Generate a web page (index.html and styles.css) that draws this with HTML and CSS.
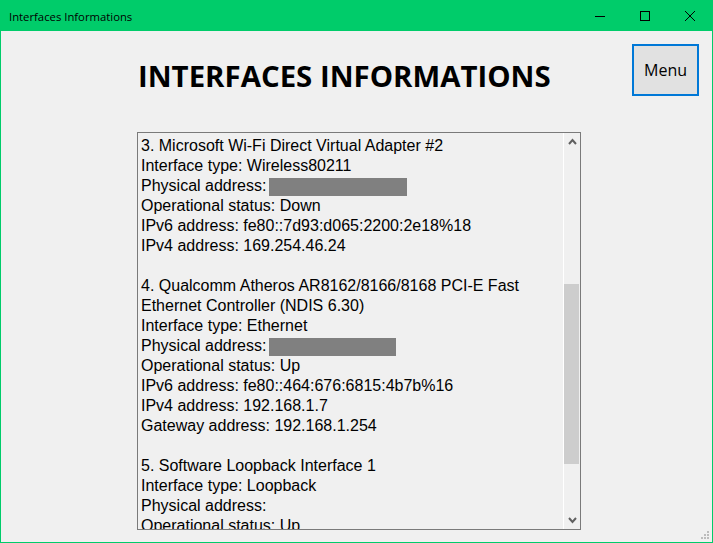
FILE: index.html
```html
<!DOCTYPE html>
<html>
<head>
<meta charset="utf-8">
<link rel="stylesheet" href="styles.css">
</head>
<body>
<div class="window">
  <div class="titlebar">
    <span class="title">Interfaces Informations</span>
    <div class="controls">
      <span class="ctl"><svg width="10" height="10" viewBox="0 0 10 10"><path d="M0 5.5H10" stroke="#000" stroke-width="1"/></svg></span>
      <span class="ctl"><svg width="10" height="10" viewBox="0 0 10 10"><rect x="0.5" y="0.5" width="9" height="9" fill="none" stroke="#000" stroke-width="1"/></svg></span>
      <span class="ctl"><svg width="10" height="10" viewBox="0 0 10 10"><path d="M0 0L10 10M10 0L0 10" stroke="#000" stroke-width="1"/></svg></span>
    </div>
  </div>
  <div class="content">
    <div class="header">
      <h1 class="heading">INTERFACES INFORMATIONS</h1>
      <button class="menu">Menu</button>
    </div>
    <div class="textbox">
      <div class="text">
        <div>3. Microsoft Wi-Fi Direct Virtual Adapter #2</div>
        <div>Interface type: Wireless80211</div>
        <div>Physical address: <span class="mask m1"></span></div>
        <div>Operational status: Down</div>
        <div>IPv6 address: fe80::7d93:d065:2200:2e18%18</div>
        <div>IPv4 address: 169.254.46.24</div>
        <div>&nbsp;</div>
        <div>4. Qualcomm Atheros AR8162/8166/8168 PCI-E Fast</div>
        <div>Ethernet Controller (NDIS 6.30)</div>
        <div>Interface type: Ethernet</div>
        <div>Physical address: <span class="mask m2"></span></div>
        <div>Operational status: Up</div>
        <div>IPv6 address: fe80::464:676:6815:4b7b%16</div>
        <div>IPv4 address: 192.168.1.7</div>
        <div>Gateway address: 192.168.1.254</div>
        <div>&nbsp;</div>
        <div>5. Software Loopback Interface 1</div>
        <div>Interface type: Loopback</div>
        <div>Physical address:</div>
        <div>Operational status: Up</div>
      </div>
      <div class="scrollbar">
        <div class="arrow"><svg width="9" height="7" viewBox="0 0 9 7"><path d="M1 6L4.5 2L8 6" fill="none" stroke="#606060" stroke-width="2"/></svg></div>
        <div class="track"><div class="thumb"></div></div>
        <div class="arrow"><svg width="9" height="7" viewBox="0 0 9 7"><path d="M1 1L4.5 5L8 1" fill="none" stroke="#606060" stroke-width="2"/></svg></div>
      </div>
    </div>
  </div>
  <svg class="grip" width="9" height="9" viewBox="0 0 9 9">
    <rect x="6" y="0" width="2" height="2" fill="#bcbcbc"/>
    <rect x="3" y="3" width="2" height="2" fill="#bcbcbc"/>
    <rect x="6" y="3" width="2" height="2" fill="#bcbcbc"/>
    <rect x="0" y="6" width="2" height="2" fill="#bcbcbc"/>
    <rect x="3" y="6" width="2" height="2" fill="#bcbcbc"/>
    <rect x="6" y="6" width="2" height="2" fill="#bcbcbc"/>
  </svg>
</div>
</body>
</html>
```
FILE: styles.css
```css
html, body {
  margin: 0;
  padding: 0;
}
body {
  width: 713px;
  height: 543px;
  overflow: hidden;
}
.window {
  position: relative;
  box-sizing: border-box;
  width: 713px;
  height: 543px;
  border: 1px solid #00cc6a;
  background: #f0f0f0;
  display: flex;
  flex-direction: column;
}
.titlebar {
  height: 30px;
  background: #00cc6a;
  display: flex;
  align-items: center;
  flex-shrink: 0;
}
.title {
  font-family: "Open Sans", sans-serif;
  font-size: 11.3px;
  color: #000;
  padding-left: 8px;
}
.controls {
  margin-left: auto;
  display: flex;
  height: 30px;
}
.ctl {
  width: 45px;
  height: 30px;
  display: flex;
  align-items: center;
  justify-content: center;
}
.content {
  flex: 1;
  display: flex;
  flex-direction: column;
  padding-left: 136px;
  padding-right: 13px;
}
.header {
  display: flex;
  align-items: flex-start;
  height: 101px;
}
.heading {
  margin: 25px 0 0 1px;
  font-family: "Open Sans", sans-serif;
  font-weight: 700;
  font-size: 29.4px;
  line-height: 40px;
  color: #000;
}
.menu {
  margin-left: auto;
  margin-top: 13px;
  width: 67px;
  height: 52px;
  box-sizing: border-box;
  border: 2px solid #0078d7;
  background: #e1e1e1;
  font-family: "Open Sans", sans-serif;
  font-size: 16px;
  color: #000;
  padding: 0;
  display: flex;
  align-items: center;
  justify-content: center;
  line-height: 1;
}
.textbox {
  width: 444px;
  height: 398px;
  box-sizing: border-box;
  border: 1px solid #7a7a7a;
  background: #f0f0f0;
  display: flex;
  overflow: hidden;
}
.text {
  flex: 1;
  padding: 3px 0 0 3px;
  font-family: "Liberation Sans", Arial, sans-serif;
  font-size: 16px;
  line-height: 20px;
  color: #000;
  white-space: nowrap;
  overflow: hidden;
}
.mask {
  display: inline-block;
  vertical-align: top;
  margin-top: 2px;
  margin-left: -2px;
  height: 18px;
  background: #808080;
}
.m1 { width: 138px; }
.m2 { width: 127px; }
.scrollbar {
  width: 17px;
  box-sizing: border-box;
  border-left: 1px solid #ffffff;
  background: #f0f0f0;
  display: flex;
  flex-direction: column;
}
.arrow {
  height: 17px;
  display: flex;
  align-items: center;
  justify-content: center;
}
.track {
  flex: 1;
  position: relative;
}
.thumb {
  position: absolute;
  left: 0;
  width: 15px;
  top: 134px;
  height: 180px;
  background: #cdcdcd;
}
.grip {
  position: absolute;
  right: 2px;
  bottom: 2px;
}
```
